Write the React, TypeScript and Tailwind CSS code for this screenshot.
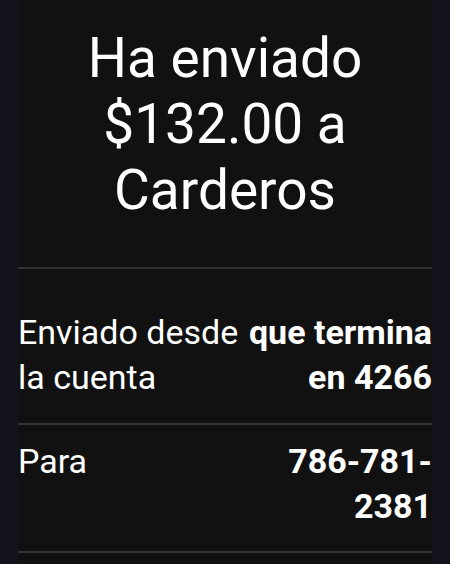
export default function App() {
  return (
    <div className="min-h-[564px] w-[450px] bg-[#12131b] px-[18px] font-['Roboto',sans-serif] text-white">
      <div className="min-h-[564px] bg-[#111111]">
        <div className="pt-[25px] pb-[44px] text-center text-[55px] leading-[66px]">
          Ha enviado
          <br />
          $132.00 a
          <br />
          Carderos
        </div>
        <div className="h-[2px] bg-[#333333]" />
        <div className="flex pt-[41px] pb-[23px] text-[34px] leading-[45px]">
          <div className="w-[228px] shrink-0">Enviado desde la cuenta</div>
          <div className="flex-1 text-right font-bold">que termina en 4266</div>
        </div>
        <div className="h-[2px] bg-[#333333]" />
        <div className="flex pt-[14px] pb-[22px] text-[34px] leading-[45px]">
          <div className="w-[228px] shrink-0">Para</div>
          <div className="flex-1 text-right font-bold">786-781-2381</div>
        </div>
        <div className="h-[2px] bg-[#333333]" />
      </div>
    </div>
  )
}
